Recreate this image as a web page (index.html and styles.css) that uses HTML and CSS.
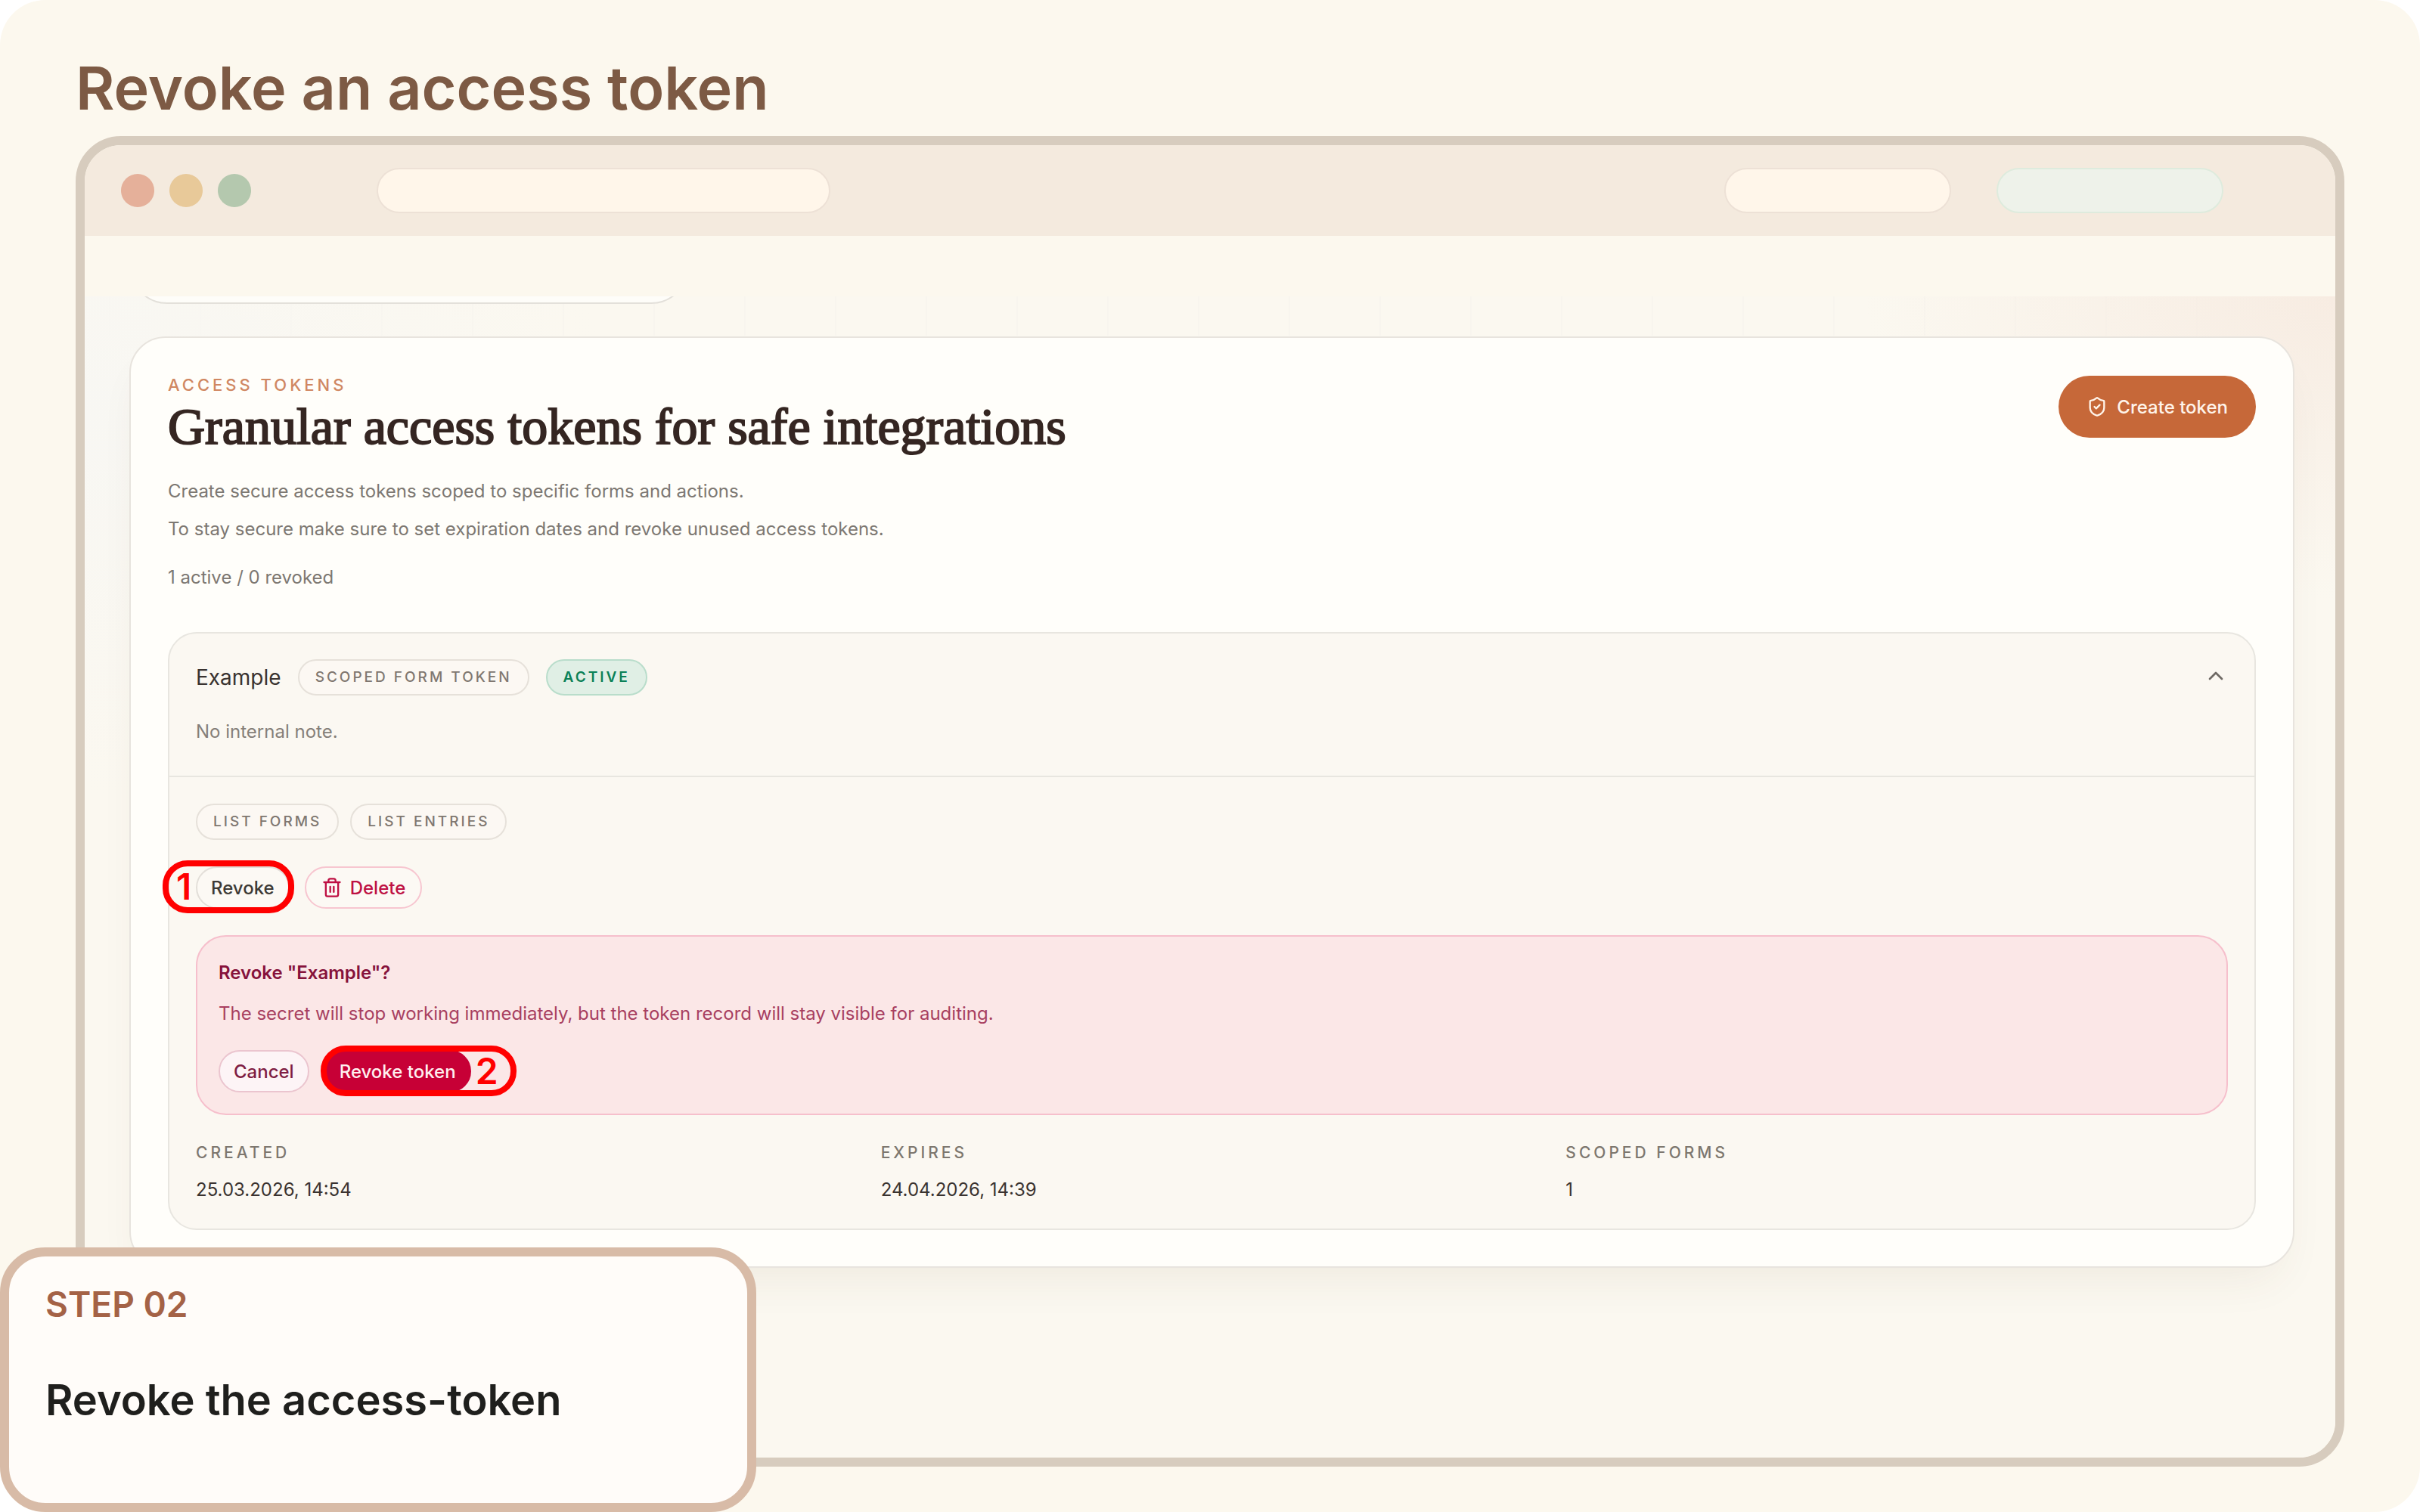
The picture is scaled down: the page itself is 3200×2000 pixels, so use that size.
FILE: index.html
```html
<!DOCTYPE html>
<html lang="en">
<head>
  <meta charset="UTF-8">
  <meta name="viewport" content="width=device-width, initial-scale=1">
  <title>Revoke an access token</title>
  <link rel="stylesheet" href="styles.css">
</head>
<body>

<div class="slide">
  <h1>Revoke an access token</h1>

  <div class="window">
    <div class="toolbar">
      <span class="dot red"></span>
      <span class="dot yellow"></span>
      <span class="dot green"></span>
      <span class="pill address"></span>
      <span class="pill"></span>
      <span class="pill mint"></span>
    </div>

    <div class="screen">
      <div class="peek"><div class="peek-card"></div></div>

      <main class="card">
        <header class="card-head">
          <div>
            <p class="eyebrow">Access tokens</p>
            <h2>Granular access tokens for safe integrations</h2>
            <p class="lead">Create secure access tokens scoped to specific forms and actions.<br>To stay secure make sure to set expiration dates and revoke unused access tokens.</p>
            <p class="count">1 active / 0 revoked</p>
          </div>
          <button class="create">
            <svg viewBox="0 0 24 24"><path d="M20 13c0 5-3.5 7.5-7.66 8.95a1 1 0 0 1-.67-.01C7.5 20.5 4 18 4 13V6a1 1 0 0 1 1-1c2 0 4.500-1.200 6.240-2.720a1.170 1.170 0 0 1 1.520 0C14.510 3.810 17 5 19 5a1 1 0 0 1 1 1z"/><path d="m9 12 2 2 4-4"/></svg>
            Create token
          </button>
        </header>

        <section class="token">
          <div class="token-head">
            <div>
              <div class="name-row">
                <h3>Example</h3>
                <span class="badge">Scoped form token</span>
                <span class="badge active">Active</span>
              </div>
              <p class="note">No internal note.</p>
            </div>
            <button class="toggle" aria-label="Collapse">
              <svg viewBox="0 0 24 24"><path d="m18 15-6-6-6 6"/></svg>
            </button>
          </div>

          <div class="token-body">
            <div class="scopes">
              <span class="badge">List forms</span>
              <span class="badge">List entries</span>
            </div>

            <div class="actions">
              <div class="callout first">
                <button class="btn">Revoke</button>
                <span class="ring">1</span>
              </div>
              <button class="btn delete">
                <svg viewBox="0 0 24 24"><path d="M3 6h18M19 6v14a2 2 0 0 1-2 2H7a2 2 0 0 1-2-2V6M8 6V4a2 2 0 0 1 2-2h4a2 2 0 0 1 2 2v2M10 11v6M14 11v6"/></svg>
                Delete
              </button>
            </div>

            <div class="confirm">
              <h4>Revoke "Example"?</h4>
              <p>The secret will stop working immediately, but the token record will stay visible for auditing.</p>
              <div class="actions">
                <button class="btn cancel">Cancel</button>
                <div class="callout second">
                  <button class="btn danger">Revoke token</button>
                  <span class="ring">2</span>
                </div>
              </div>
            </div>

            <dl class="facts">
              <div><dt>Created</dt><dd>25.03.2026, 14:54</dd></div>
              <div><dt>Expires</dt><dd>24.04.2026, 14:39</dd></div>
              <div><dt>Scoped forms</dt><dd>1</dd></div>
            </dl>
          </div>
        </section>
      </main>
    </div>
  </div>

  <aside class="step">
    <p class="step-number">STEP 02</p>
    <p class="step-title">Revoke the access-token</p>
  </aside>
</div>

</body>
</html>
```
FILE: styles.css
```css
* {
  box-sizing: border-box;
}
body {
  font-family: Inter, sans-serif;
  background: white;
  margin: 0;
  color: #3a3330;
}
h1, h2, h3, h4, p, dl, dd {
  margin: 0;
}
button {
  font-family: inherit;
  cursor: pointer;
}
svg {
  fill: none;
  stroke: currentColor;
  stroke-width: 2;
  stroke-linecap: round;
  stroke-linejoin: round;
}

.slide {
  position: relative;
  display: flex;
  flex-direction: column;
  min-height: 100vh;
  padding: 66px 100px 60px;
  background: #fcf8ee;
  border-radius: 60px;
}
h1 {
  margin-bottom: 14px;
  font-size: 79px;
  font-weight: 600;
  line-height: 100px;
  color: #7d5a44;
}

/* browser window */
.window {
  flex: 1;
  display: flex;
  flex-direction: column;
  border: 12px solid #d7ccbe;
  border-radius: 60px;
  overflow: hidden;
}
.toolbar {
  display: flex;
  align-items: center;
  gap: 20px;
  height: 120px;
  padding: 0 148px 0 48px;
  background: #f4eade;
}
.dot {
  width: 44px;
  height: 44px;
  border-radius: 50%;
}
.red { background: #e5b09a; }
.yellow { background: #e8c999; }
.green { background: #b4c8ae; }
.pill {
  width: 300px;
  height: 60px;
  background: #fff6ea;
  border: 2px solid #ede1d6;
  border-radius: 30px;
}
.address {
  width: 600px;
  margin: 0 auto 0 146px;
}
.mint {
  margin-left: 40px;
  background: #eef2ea;
  border-color: #deebdd;
}

.screen {
  flex: 1;
  margin-top: 80px;
  padding: 0 54px 60px 59px;
  background:
    radial-gradient(ellipse 620px 400px at 100% 0, #f7ece2, transparent),
    radial-gradient(ellipse 700px 500px at 0 160px, #f8f7f3, transparent),
    repeating-linear-gradient(to right, transparent 0 32px, #f8f5ee 32px 34px, transparent 34px 120px) 0 0 / 100% 52px no-repeat,
    #fbf8f0;
}
/* bottom edge of the card that is scrolled out of view */
.peek {
  display: flex;
  align-items: flex-end;
  height: 10px;
  margin-bottom: 43px;
  overflow: hidden;
}
.peek-card {
  flex: none;
  width: 740px;
  height: 120px;
  background: #fefdf9;
  border: 2px solid #e3e0da;
  border-radius: 50px;
}

/* access tokens card */
.card {
  padding: 48px 49px;
  background: #fffefa;
  border: 2px solid #e8e4de;
  border-radius: 48px;
  box-shadow: 0 32px 60px -20px rgba(90, 60, 40, 0.08);
}
.card-head {
  display: flex;
  justify-content: space-between;
  align-items: flex-start;
  margin-bottom: 47px;
}
.eyebrow {
  font-size: 22px;
  font-weight: 500;
  line-height: 28px;
  letter-spacing: 4px;
  text-transform: uppercase;
  color: #d08762;
}
h2 {
  margin-bottom: 20px;
  font-family: "Liberation Serif", serif;
  font-size: 68px;
  font-weight: 400;
  line-height: 82px;
  color: #352622;
  -webkit-text-stroke: 2px #352622;
}
.lead, .count {
  font-size: 24px;
  line-height: 50px;
  color: #7d7872;
}
.count {
  margin-top: 14px;
}
.create {
  display: flex;
  align-items: center;
  gap: 12px;
  height: 82px;
  margin-top: 2px;
  padding: 0 37px;
  font-size: 24px;
  font-weight: 500;
  color: #fff4ea;
  background: #c66839;
  border: none;
  border-radius: 41px;
}
.create svg, .delete svg {
  width: 28px;
  height: 28px;
}

/* token panel */
.token {
  background: #fbf8f2;
  border: 2px solid #e8e6e0;
  border-radius: 38px;
}
.token-head {
  display: flex;
  justify-content: space-between;
  align-items: flex-start;
  padding: 34px 35px 38px;
  border-bottom: 2px solid #e8e6e0;
}
.name-row {
  display: flex;
  align-items: center;
  gap: 22px;
}
h3 {
  font-size: 28px;
  font-weight: 400;
  line-height: 48px;
}
.badge {
  height: 48px;
  padding: 0 21px;
  font-size: 19px;
  font-weight: 500;
  line-height: 44px;
  letter-spacing: 3px;
  text-transform: uppercase;
  color: #807770;
  background: #fcf8f3;
  border: 2px solid #e6e1da;
  border-radius: 24px;
}
.badge.active {
  font-weight: 600;
  color: #0b8157;
  background: #e0efe5;
  border-color: #b9ddcb;
}
.note {
  margin-top: 28px;
  font-size: 24px;
  line-height: 40px;
  color: #857f79;
}
.toggle {
  margin: 6px 0;
  padding: 0;
  color: #6f6a65;
  background: none;
  border: none;
}
.toggle svg {
  display: block;
  width: 32px;
  height: 32px;
}
.token-body {
  display: flex;
  flex-direction: column;
  gap: 35px;
  padding: 35px 35px 31px;
}
.scopes {
  display: flex;
  gap: 15px;
}
.actions {
  display: flex;
  gap: 20px;
}
.btn {
  display: flex;
  align-items: center;
  gap: 10px;
  height: 56px;
  padding: 0 18px;
  font-size: 24px;
  font-weight: 500;
  color: #3d3935;
  background: #fcf9f4;
  border: 2px solid #e3dfd9;
  border-radius: 28px;
}
.delete {
  padding: 0 20px;
  color: #be1043;
  border-color: #f7c6d0;
}

/* confirmation box */
.confirm {
  padding: 28px;
  background: #fbe7e7;
  border: 2px solid #f6bfcc;
  border-radius: 40px;
}
.confirm h4 {
  font-size: 24px;
  font-weight: 600;
  line-height: 40px;
  color: #86123b;
}
.confirm p {
  margin: 14px 0 28px;
  font-size: 24px;
  line-height: 40px;
  color: #a83f60;
}
.cancel {
  color: #7f1d43;
  background: #fdf4f6;
  border-color: #ebc5cf;
}
.danger {
  color: #fff0f0;
  background: #c70036;
  border-color: #c70036;
}

/* numbered red rings around the buttons */
.callout {
  position: relative;
}
.ring {
  position: absolute;
  display: flex;
  align-items: center;
  border: 8px solid #ff0000;
  border-radius: 33px;
  font-size: 48px;
  font-weight: 600;
  line-height: 48px;
  color: #ff0000;
  pointer-events: none;
}
.first .ring {
  inset: -8px -6px -6px -44px;
  padding-left: 10px;
}
.second .ring {
  inset: -6px -60px -5px -5px;
  justify-content: flex-end;
  padding-right: 16px;
}

.facts {
  display: grid;
  grid-template-columns: repeat(3, 1fr);
  gap: 30px;
}
dt {
  font-size: 21px;
  font-weight: 500;
  line-height: 30px;
  letter-spacing: 4px;
  text-transform: uppercase;
  color: #7d776f;
}
dd {
  margin-top: 14px;
  font-size: 24px;
  line-height: 40px;
}

/* step caption, overlaps the window corner */
.step {
  position: absolute;
  left: 0;
  bottom: 0;
  width: 1000px;
  height: 350px;
  padding: 34px 48px;
  background: #fffcf9;
  border: 12px solid #d8bba7;
  border-radius: 60px;
}
.step-number {
  font-size: 46px;
  font-weight: 600;
  line-height: 58px;
  color: #a46246;
}
.step-title {
  margin-top: 64px;
  font-size: 56px;
  font-weight: 600;
  line-height: 68px;
  color: #1f1f1d;
}
```
